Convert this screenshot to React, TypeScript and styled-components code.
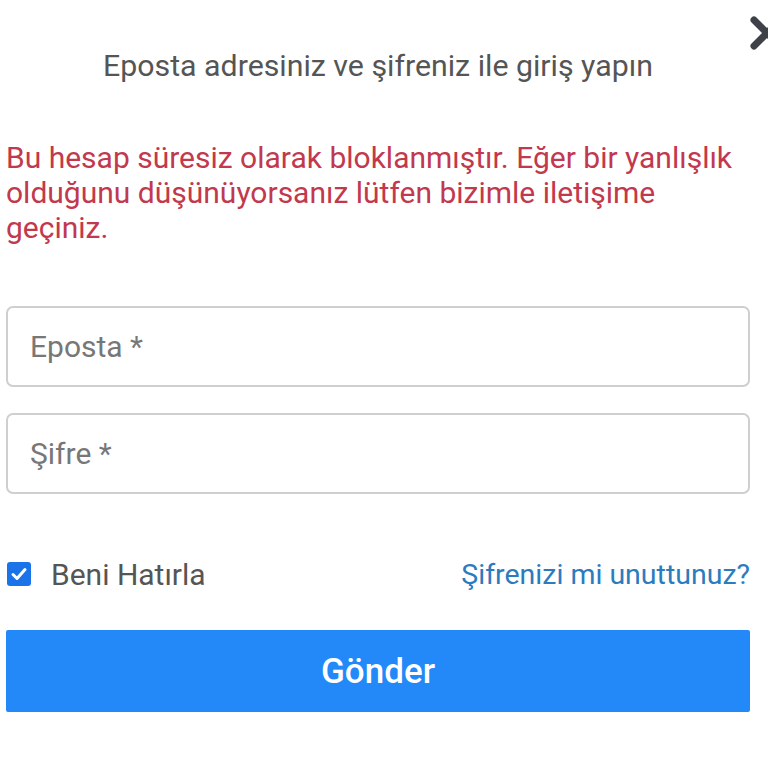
import React from 'react';
import styled, { createGlobalStyle } from 'styled-components';

const GlobalStyle = createGlobalStyle`
  html, body {
    margin: 0;
    padding: 0;
    background: #ffffff;
    overflow: hidden;
  }
  body {
    font-family: Roboto, "Noto Sans", "Liberation Sans", sans-serif;
  }
`

const Modal = styled.div`
  position: relative;
  width: 768px;
  height: 768px;
  box-sizing: border-box;
  padding: 46px 18px 0 6px;
  display: flex;
  flex-direction: column;
`

const CloseButton = styled.button`
  position: absolute;
  top: 16px;
  left: 750px;
  width: 34px;
  height: 34px;
  padding: 0;
  border: none;
  background: none;
  cursor: pointer;
`

const Title = styled.h2`
  margin: 0;
  font-size: 30.3px;
  line-height: 40px;
  font-weight: 400;
  color: #555555;
  text-align: center;
`

const ErrorText = styled.p`
  margin: 54px 0 0;
  font-size: 30px;
  line-height: 35px;
  color: #c2394d;
`

const Form = styled.form`
  display: flex;
  flex-direction: column;
  margin-top: 61px;
`

const Input = styled.input`
  box-sizing: border-box;
  width: 100%;
  height: 81px;
  padding: 0 22px;
  border: 2px solid #cfcfcf;
  border-radius: 7px;
  font-family: inherit;
  font-size: 30px;
  color: #333;
  outline: none;
  & + & {
    margin-top: 26px;
  }
  &::placeholder {
    color: #777777;
  }
`

const OptionsRow = styled.div`
  display: flex;
  align-items: center;
  justify-content: space-between;
  margin-top: 62px;
  height: 36px;
`

const CheckLabel = styled.label`
  display: flex;
  align-items: center;
  gap: 20px;
  font-size: 30px;
  color: #555555;
  cursor: pointer;
`

const CheckBox = styled.span`
  width: 24px;
  height: 24px;
  margin-left: 1px;
  border-radius: 3px;
  background: #1a73e8;
  display: flex;
  align-items: center;
  justify-content: center;
`

const ForgotLink = styled.a`
  font-size: 28.5px;
  color: #2b7bbf;
  text-decoration: none;
`

const SubmitButton = styled.button`
  margin-top: 38px;
  height: 82px;
  border: none;
  border-radius: 2px;
  background: #2389f8;
  color: #ffffff;
  font-family: inherit;
  font-size: 35px;
  font-weight: 500;
  cursor: pointer;
`

const App = () => {
  return (
    <>
      <GlobalStyle />
      <Modal>
        <CloseButton aria-label="Kapat">
          <svg width="34" height="34" viewBox="0 0 34 34">
            <path d="M4 4 L30 30 M30 4 L4 30" stroke="#3f4148" strokeWidth="7" strokeLinecap="round" />
          </svg>
        </CloseButton>
        <Title>Eposta adresiniz ve şifreniz ile giriş yapın</Title>
        <ErrorText>
          Bu hesap süresiz olarak bloklanmıştır. Eğer bir yanlışlık olduğunu düşünüyorsanız lütfen bizimle iletişime geçiniz.
        </ErrorText>
        <Form onSubmit={e => e.preventDefault()}>
          <Input type="email" placeholder="Eposta *" />
          <Input type="password" placeholder="Şifre *" />
          <OptionsRow>
            <CheckLabel>
              <CheckBox>
                <svg width="18" height="18" viewBox="0 0 18 18">
                  <path d="M3 9.5 L7 13.5 L15 4.5" stroke="#ffffff" strokeWidth="3" fill="none" strokeLinecap="round" strokeLinejoin="round" />
                </svg>
              </CheckBox>
              Beni Hatırla
            </CheckLabel>
            <ForgotLink href="#">Şifrenizi mi unuttunuz?</ForgotLink>
          </OptionsRow>
          <SubmitButton type="submit">Gönder</SubmitButton>
        </Form>
      </Modal>
    </>
  )
}

export default App
